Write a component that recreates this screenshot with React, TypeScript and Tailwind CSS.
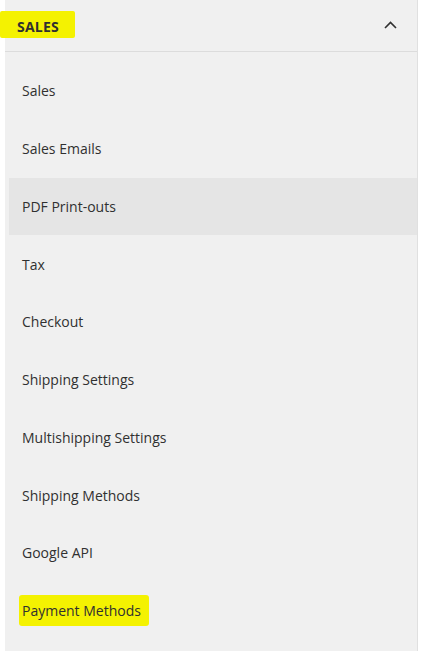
import React from "react";

const items = [
  "Sales",
  "Sales Emails",
  "PDF Print-outs",
  "Tax",
  "Checkout",
  "Shipping Settings",
  "Multishipping Settings",
  "Shipping Methods",
  "Google API",
  "Payment Methods",
];

export default function App() {
  return (
    <div
      className="w-[421px] h-[651px] bg-white overflow-hidden relative"
      style={{ fontFamily: '"Open Sans", sans-serif' }}
    >
      <div className="ml-[5px] w-[413px] h-full bg-[#f0f0f0] border-r border-[#e0e0e0] flex flex-col">
        <div className="relative h-[52px] border-b border-[#dcdcdc] flex items-center justify-between pl-[12px] pr-[20px]">
          <div className="absolute left-[-5px] top-[11px] w-[75px] h-[27px] bg-[#f4f201] rounded-[2px]" />
          <span className="relative text-[14px] font-bold text-[#303030] tracking-[0.2px] mt-[1px]">SALES</span>
          <svg width="13" height="8" viewBox="0 0 13 8" className="mt-[-2px]">
            <path d="M1 7 L6.5 1.5 L12 7" fill="none" stroke="#303030" strokeWidth="1.6" />
          </svg>
        </div>
        <div className="pt-[10px] pl-[4px]">
          {items.map((it, i) => (
            <div
              key={it}
              className={`h-[57.75px] flex items-center pl-[13px] text-[14px] text-[#303030] ${
                i === 2 ? "bg-[#e5e5e5]" : ""
              }`}
            >
              {i === 9 ? (
                <span className="bg-[#f4f201] ml-[-3px] pl-[3px] pr-[8px] py-[5px] rounded-[3px]">{it}</span>
              ) : (
                <span>{it}</span>
              )}
            </div>
          ))}
        </div>
      </div>
    </div>
  );
}
